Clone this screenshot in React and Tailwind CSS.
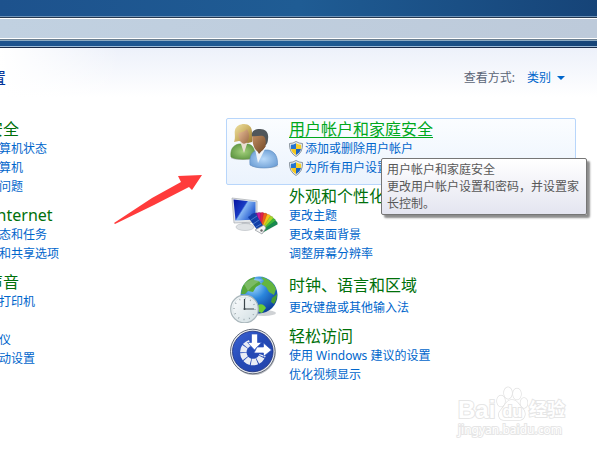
import React from "react";

function UsersIcon() {
  return (
    <svg viewBox="0 0 48 50" className="h-[50px] w-12 shrink-0" aria-hidden="true">
      <defs>
        <linearGradient id="hair" x1="0" y1="0" x2="1" y2="1">
          <stop offset="0" stopColor="#f0e4a6" />
          <stop offset=".5" stopColor="#cdb266" />
          <stop offset="1" stopColor="#94742c" />
        </linearGradient>
        <radialGradient id="green" cx=".5" cy=".5" r=".6">
          <stop offset="0" stopColor="#a3d07c" />
          <stop offset="1" stopColor="#5c9440" />
        </radialGradient>
        <radialGradient id="blue" cx=".5" cy=".5" r=".6">
          <stop offset="0" stopColor="#b9dafa" />
          <stop offset="1" stopColor="#6b9dd4" />
        </radialGradient>
        <linearGradient id="faceA" x1="0" y1="0" x2="1" y2="1">
          <stop offset="0" stopColor="#eabf98" />
          <stop offset="1" stopColor="#9a6a48" />
        </linearGradient>
        <linearGradient id="faceB" x1="0" y1="0" x2="1" y2="1">
          <stop offset="0" stopColor="#c08c60" />
          <stop offset="1" stopColor="#744a29" />
        </linearGradient>
      </defs>
      <ellipse cx="14" cy="39" rx="13" ry="2" fill="#c9cdd2" />
      <ellipse cx="35" cy="47" rx="13" ry="2" fill="#c9cdd2" />
      <path d="M1 38C0 31 3 26 9 25L18 25C23 26 25 30 25 38C20 41 6 41 1 38Z" fill="url(#green)" stroke="#5c8d3c" strokeWidth=".6" />
      <path d="M10 22L14 34L18 22Z" fill="#e9dfd2" />
      <path d="M4 23C6 18 4 14 5 11C6 7 10 5 14 5C19 5 22 8 22 13C22 17 23 21 22 23L18 24L9 22Z" fill="url(#hair)" />
      <path d="M8.500 14C13 13 15 12 17 10C19 13 19.500 17 18.500 20C17 26 12 26 10 21C9 19 8 17 8.500 14Z" fill="url(#faceA)" />
      <path d="M20 46C19 37 22 32 28 31L38 31C45 32 48 38 47.500 46C42 50 26 50 20 46Z" fill="url(#blue)" stroke="#5a89bf" strokeWidth=".6" />
      <path d="M25 30L28 44L32 36L35 30Z" fill="#f0f4f8" />
      <path d="M25 28L29 35L36 27Z" fill="#80532f" />
      <path d="M22 17C21 12 25 10 30 10C36 10 39 14 38 20C38 23 37 25 35 27L24 20Z" fill="#50565a" />
      <path d="M22.500 17C26 18 30 16 33 17C36 18 36.500 24 35 28C32 34 27 34 24.500 29C23 26 22 21 22.500 17Z" fill="url(#faceB)" />
    </svg>
  );
}

function DisplayIcon() {
  const blades = [
    ["#203bb5", -26], ["#5a24a8", -16], ["#c01c9c", -6], ["#e02048", 4],
    ["#f0601a", 14], ["#f5c419", 25], ["#a6d82a", 36], ["#3cb83c", 47], ["#178a50", 57],
  ];
  return (
    <svg viewBox="0 0 48 48" className="size-12 shrink-0" aria-hidden="true">
      <defs>
        <linearGradient id="screen" x1="0" y1="0" x2="1" y2="0.600">
          <stop offset="0" stopColor="#0713a0" />
          <stop offset=".48" stopColor="#183bc4" />
          <stop offset=".54" stopColor="#86b6f2" />
          <stop offset="1" stopColor="#1f55cf" />
        </linearGradient>
      </defs>
      <path d="M12 30L20 31L22 37H11Z" fill="#c5c9ce" />
      <ellipse cx="15" cy="35" rx="9" ry="3.500" fill="#dfe2e5" stroke="#b5babf" strokeWidth=".6" />
      <path d="M2 6L27 9V30L4 31Z" fill="#e4e7ea" stroke="#a6abb0" strokeWidth=".7" />
      <path d="M3.500 7.500L25.500 10V27.500L5.500 28.500Z" fill="url(#screen)" />
      {blades.map(([color, angle]) => (
        <path key={color} d="M30 38L29 21Q31 19.500 33 21L32 38Z" fill={color} stroke="#222" strokeOpacity=".3" strokeWidth=".4" transform={`rotate(${angle} 30 40)`} />
      ))}
      <path d="M18 25L25 21L34 35L28 39Z" fill="#123fa8" />
      <path d="M21 28L27 24M23 32L29 28M26 35L31 32" stroke="#6fa1e8" strokeWidth=".6" />
      <path d="M25 38L34 33L36 36L32 42Z" fill="#f4f5f6" stroke="#8d9298" strokeWidth=".7" />
      <circle cx="31.500" cy="38.500" r="1.200" fill="#666" />
    </svg>
  );
}

function RegionIcon() {
  return (
    <svg viewBox="0 0 48 48" className="size-12 shrink-0" aria-hidden="true">
      <defs>
        <radialGradient id="sea" cx=".35" cy=".25" r=".8">
          <stop offset="0" stopColor="#a7dcff" />
          <stop offset=".45" stopColor="#2b86dc" />
          <stop offset="1" stopColor="#0b3c96" />
        </radialGradient>
        <linearGradient id="dial" x1="0" y1="0" x2="1" y2="1">
          <stop offset="0" stopColor="#ffffff" />
          <stop offset="1" stopColor="#cfdde2" />
        </linearGradient>
      </defs>
      <ellipse cx="34" cy="38" rx="12" ry="3" fill="#cfd2d5" />
      <circle cx="29" cy="20" r="18.500" fill="url(#sea)" />
      <path d="M12 13C15 6 20 3 25 2L24 5L29 6L31 9L26 12L23 17L18 16L15 19L11 19Z" fill="#57a83a" />
      <path d="M31 2C38 3 44 8 46 14L44 20L39 17L36 12L31 9L34 6Z" fill="#63b53e" />
      <path d="M42 23L47 19C47 23 46 26 44 29L41 27Z" fill="#479c33" />
      <path d="M28 30C32 28 35 31 36 33L32 38L29 37Z" fill="#6ccc35" />
      <path d="M14 9Q23 1 34 5Q25 7 18 16Z" fill="#fff" opacity=".22" />
      <circle cx="14.500" cy="34" r="13.800" fill="url(#dial)" stroke="#a9b6bb" strokeWidth="1.200" />
      <circle cx="14.500" cy="34" r="12" fill="none" stroke="#dfe8eb" strokeWidth="1" />
      <circle cx="14.500" cy="34" r="10.500" fill="none" stroke="#8c9aa0" strokeWidth="1.500" strokeDasharray=".8 4.700" />
      <path d="M14.500 24V34H24" fill="none" stroke="#3c464b" strokeWidth="1.200" />
      <circle cx="14.500" cy="34" r="1" fill="#3c464b" />
    </svg>
  );
}

function AccessIcon() {
  return (
    <svg viewBox="0 0 48 48" className="size-12 shrink-0" aria-hidden="true">
      <defs>
        <linearGradient id="disc" x1="0" y1="0" x2="1" y2="1">
          <stop offset="0" stopColor="#3a63d4" />
          <stop offset=".5" stopColor="#2449b5" />
          <stop offset="1" stopColor="#2344ac" />
        </linearGradient>
      </defs>
      <circle cx="23.500" cy="24.800" r="22.300" fill="#b9bcc2" />
      <circle cx="22.800" cy="23.500" r="22.300" fill="#e8ebf0" stroke="#555c6c" strokeWidth=".9" />
      <circle cx="22.800" cy="23.500" r="20.300" fill="url(#disc)" stroke="#1c2f78" strokeWidth=".8" />
      <path d="M20 15A9.800 9.800 0 1 0 32.500 27" fill="none" stroke="#e9edf5" strokeWidth="6.500" strokeDasharray="5.600 .8" />
      <path d="M21.500 6H27.500V14.500H31.500L24.500 22L17.500 14.500H21.500Z" fill="#fff" stroke="#3158c0" strokeWidth=".7" />
      <path d="M27 19H33.500V15L41.500 22L33.500 28.500V25H24Z" fill="#fff" stroke="#3158c0" strokeWidth=".7" />
    </svg>
  );
}

function Shield() {
  return (
    <svg viewBox="0 0 14 16" className="mr-0.5 h-4 w-3.5 shrink-0" aria-hidden="true">
      <path d="M7 .5Q10 2.500 13.500 2.500Q14 11.500 7 15.500Q0 11.500 .5 2.500Q4 2.500 7 .5Z" fill="#e9edf0" stroke="#7f8a94" strokeWidth=".9" />
      <path d="M7 2.200V8H2Q1.600 5.500 2 3.800Q4.500 3.700 7 2.200Z" fill="#2474d0" />
      <path d="M7 2.200V8H12Q12.400 5.500 12 3.800Q9.500 3.700 7 2.200Z" fill="#f8d029" />
      <path d="M7 8H2Q3 11.800 7 14Z" fill="#f5c81c" />
      <path d="M7 8H12Q11 11.800 7 14Z" fill="#1b62be" />
    </svg>
  );
}

function TaskLink({ children, shield }) {
  return (
    <li className="flex h-[19px] items-center">
      {shield && <Shield />}
      <a href="#" className="text-[#0066cc]">{children}</a>
    </li>
  );
}

function Group({ title, tasks, active, shield, spaced }) {
  return (
    <div className="min-w-0">
      <h2 className="h-5 text-base leading-5">
        <a href="#" className={active ? "text-[#00a81c] underline decoration-1 underline-offset-2" : "text-[#00700a]"}>{title}</a>
      </h2>
      <ul className={spaced ? "pt-[3px]" : ""}>
        {tasks.map((t) => <TaskLink key={t} shield={shield}>{t}</TaskLink>)}
      </ul>
    </div>
  );
}

function Watermark() {
  return (
    <div className="absolute right-8 bottom-3 w-[107px] text-white [paint-order:stroke_fill] [-webkit-text-stroke:2px_#e6e6e6]">
      <div className="flex h-6 items-center justify-between font-[Liberation_Sans,Noto_Sans_CJK_SC,sans-serif] font-bold">
        <span className="text-2xl leading-6">Bai</span>
        <span className="relative flex h-6 w-8 items-center justify-center">
          <svg viewBox="0 0 32 36" className="absolute bottom-0 left-0 h-9 w-8" fill="#fff" stroke="#e2e2e2" strokeWidth="1.500" aria-hidden="true">
            <ellipse cx="5" cy="15" rx="4" ry="5.500" />
            <ellipse cx="12" cy="7" rx="4" ry="5.800" />
            <ellipse cx="21" cy="8" rx="4" ry="5.500" />
            <ellipse cx="28" cy="17" rx="3.500" ry="5" />
            <path d="M16 14C22 14 23 20 27 23C31 28 28 34 23 34H8C3 34 1 28 5 24C9 20 10 14 16 14Z" />
          </svg>
          <span className="relative pt-1 text-base leading-4">du</span>
        </span>
        <span className="text-lg leading-6">经验</span>
      </div>
      <div className="font-[Noto_Sans,sans-serif] text-xs leading-4">jingyan.baidu.com</div>
    </div>
  );
}

export default function App() {
  return (
    <div className="relative flex min-h-screen flex-col overflow-hidden bg-white font-[Noto_Sans,Noto_Sans_CJK_SC,sans-serif] text-xs">
      <header className="bg-linear-to-r from-[#1d528d] via-[#1f5c94] to-[#164478]">
        <div className="h-4" />
        <div className="border-t border-[#6f93b8]">
          <div className="border-t border-[#26384f]">
            <div className="h-[21px] border-y border-white bg-linear-to-r from-[#c1d1e1] to-[#bdcada]" />
          </div>
        </div>
        <div className="h-px bg-[#6b7f91]" />
        <div className="h-px bg-[#8ba9c1]" />
        <div className="h-[5px]" />
        <div className="h-px bg-[#9dbbd8]" />
        <div className="h-px bg-[#1b2c4a]" />
      </header>

      <main className="flex-1">
        <div className="flex h-[70px] items-start justify-between bg-linear-to-b from-[#edf1fa] to-white to-70% bg-no-repeat">
          <div className="flex h-full w-[120px] bg-linear-to-r from-white to-transparent pt-5">
            <h1 className="-ml-[122px] text-base leading-5 whitespace-nowrap text-[#003399]">调整计算机的设置</h1>
          </div>
          <div className="flex items-center gap-3 pt-5 pr-8 leading-5">
            <span id="view-by" className="text-[#5a6475]">查看方式:</span>
            <button type="button" aria-labelledby="view-by view-value" className="flex items-center gap-1.5 text-[#0066cc]">
              <span id="view-value">类别</span>
              <svg viewBox="0 0 8 4" className="h-1 w-2" fill="#0066cc" aria-hidden="true"><path d="M0 0H8L4 4Z" /></svg>
            </button>
          </div>
        </div>

        <div className="grid grid-cols-[226px_1fr] pr-[21px] whitespace-nowrap">
          <div className="-ml-[61px] flex flex-col gap-[9px] pt-px">
            <Group title="系统和安全" tasks={["查看您的计算机状态", "备份您的计算机", "查找并解决问题"]} />
            <Group title="网络和 Internet" tasks={["查看网络状态和任务", "选择家庭组和共享选项"]} />
            <Group title="硬件和声音" tasks={["查看设备和打印机", "添加设备", "连接到投影仪", "调整常用移动设置"]} />
          </div>

          <div className="min-w-0">
            <section className="relative flex h-[67px] gap-[11px] rounded-xs border border-[#b8d6fb] bg-linear-to-b from-[#fbfdff] to-[#ebf3fd] pl-[3px]">
              <UsersIcon />
              <Group active shield title="用户帐户和家庭安全" tasks={["添加或删除用户帐户", "为所有用户设置家长控制"]} />
              <div role="tooltip" className="absolute top-[39px] -right-3 w-[206px] rounded-xs border border-[#767676] bg-linear-to-b from-white to-[#e4e5f0] px-[5px] py-0.5 leading-[17px] whitespace-normal text-[#575757] shadow-[3px_3px_2px_rgba(0,0,0,0.45)]">
                <p>用户帐户和家庭安全</p>
                <p>更改用户帐户设置和密码，并设置家长控制。</p>
              </div>
            </section>
            <section className="flex gap-[11px] pt-px pl-1">
              <div className="pt-1.5"><DisplayIcon /></div>
              <Group title="外观和个性化" tasks={["更改主题", "更改桌面背景", "调整屏幕分辨率"]} />
            </section>
            <section className="flex gap-[11px] pt-3 pl-1">
              <RegionIcon />
              <Group spaced title="时钟、语言和区域" tasks={["更改键盘或其他输入法"]} />
            </section>
            <section className="flex gap-[11px] pt-[3px] pl-1">
              <div className="pt-0.5"><AccessIcon /></div>
              <Group title="轻松访问" tasks={["使用 Windows 建议的设置", "优化视频显示"]} />
            </section>
          </div>
        </div>
      </main>

      <svg viewBox="0 0 88 50" className="absolute top-[174px] left-[114px] h-[50px] w-[88px]" fill="#ff3b3b" aria-hidden="true">
        <path d="M0 49L38 24L67 8L64 2L88 1L78 16L75 13L40 31L1 50Z" />
      </svg>
      <Watermark />
    </div>
  );
}
